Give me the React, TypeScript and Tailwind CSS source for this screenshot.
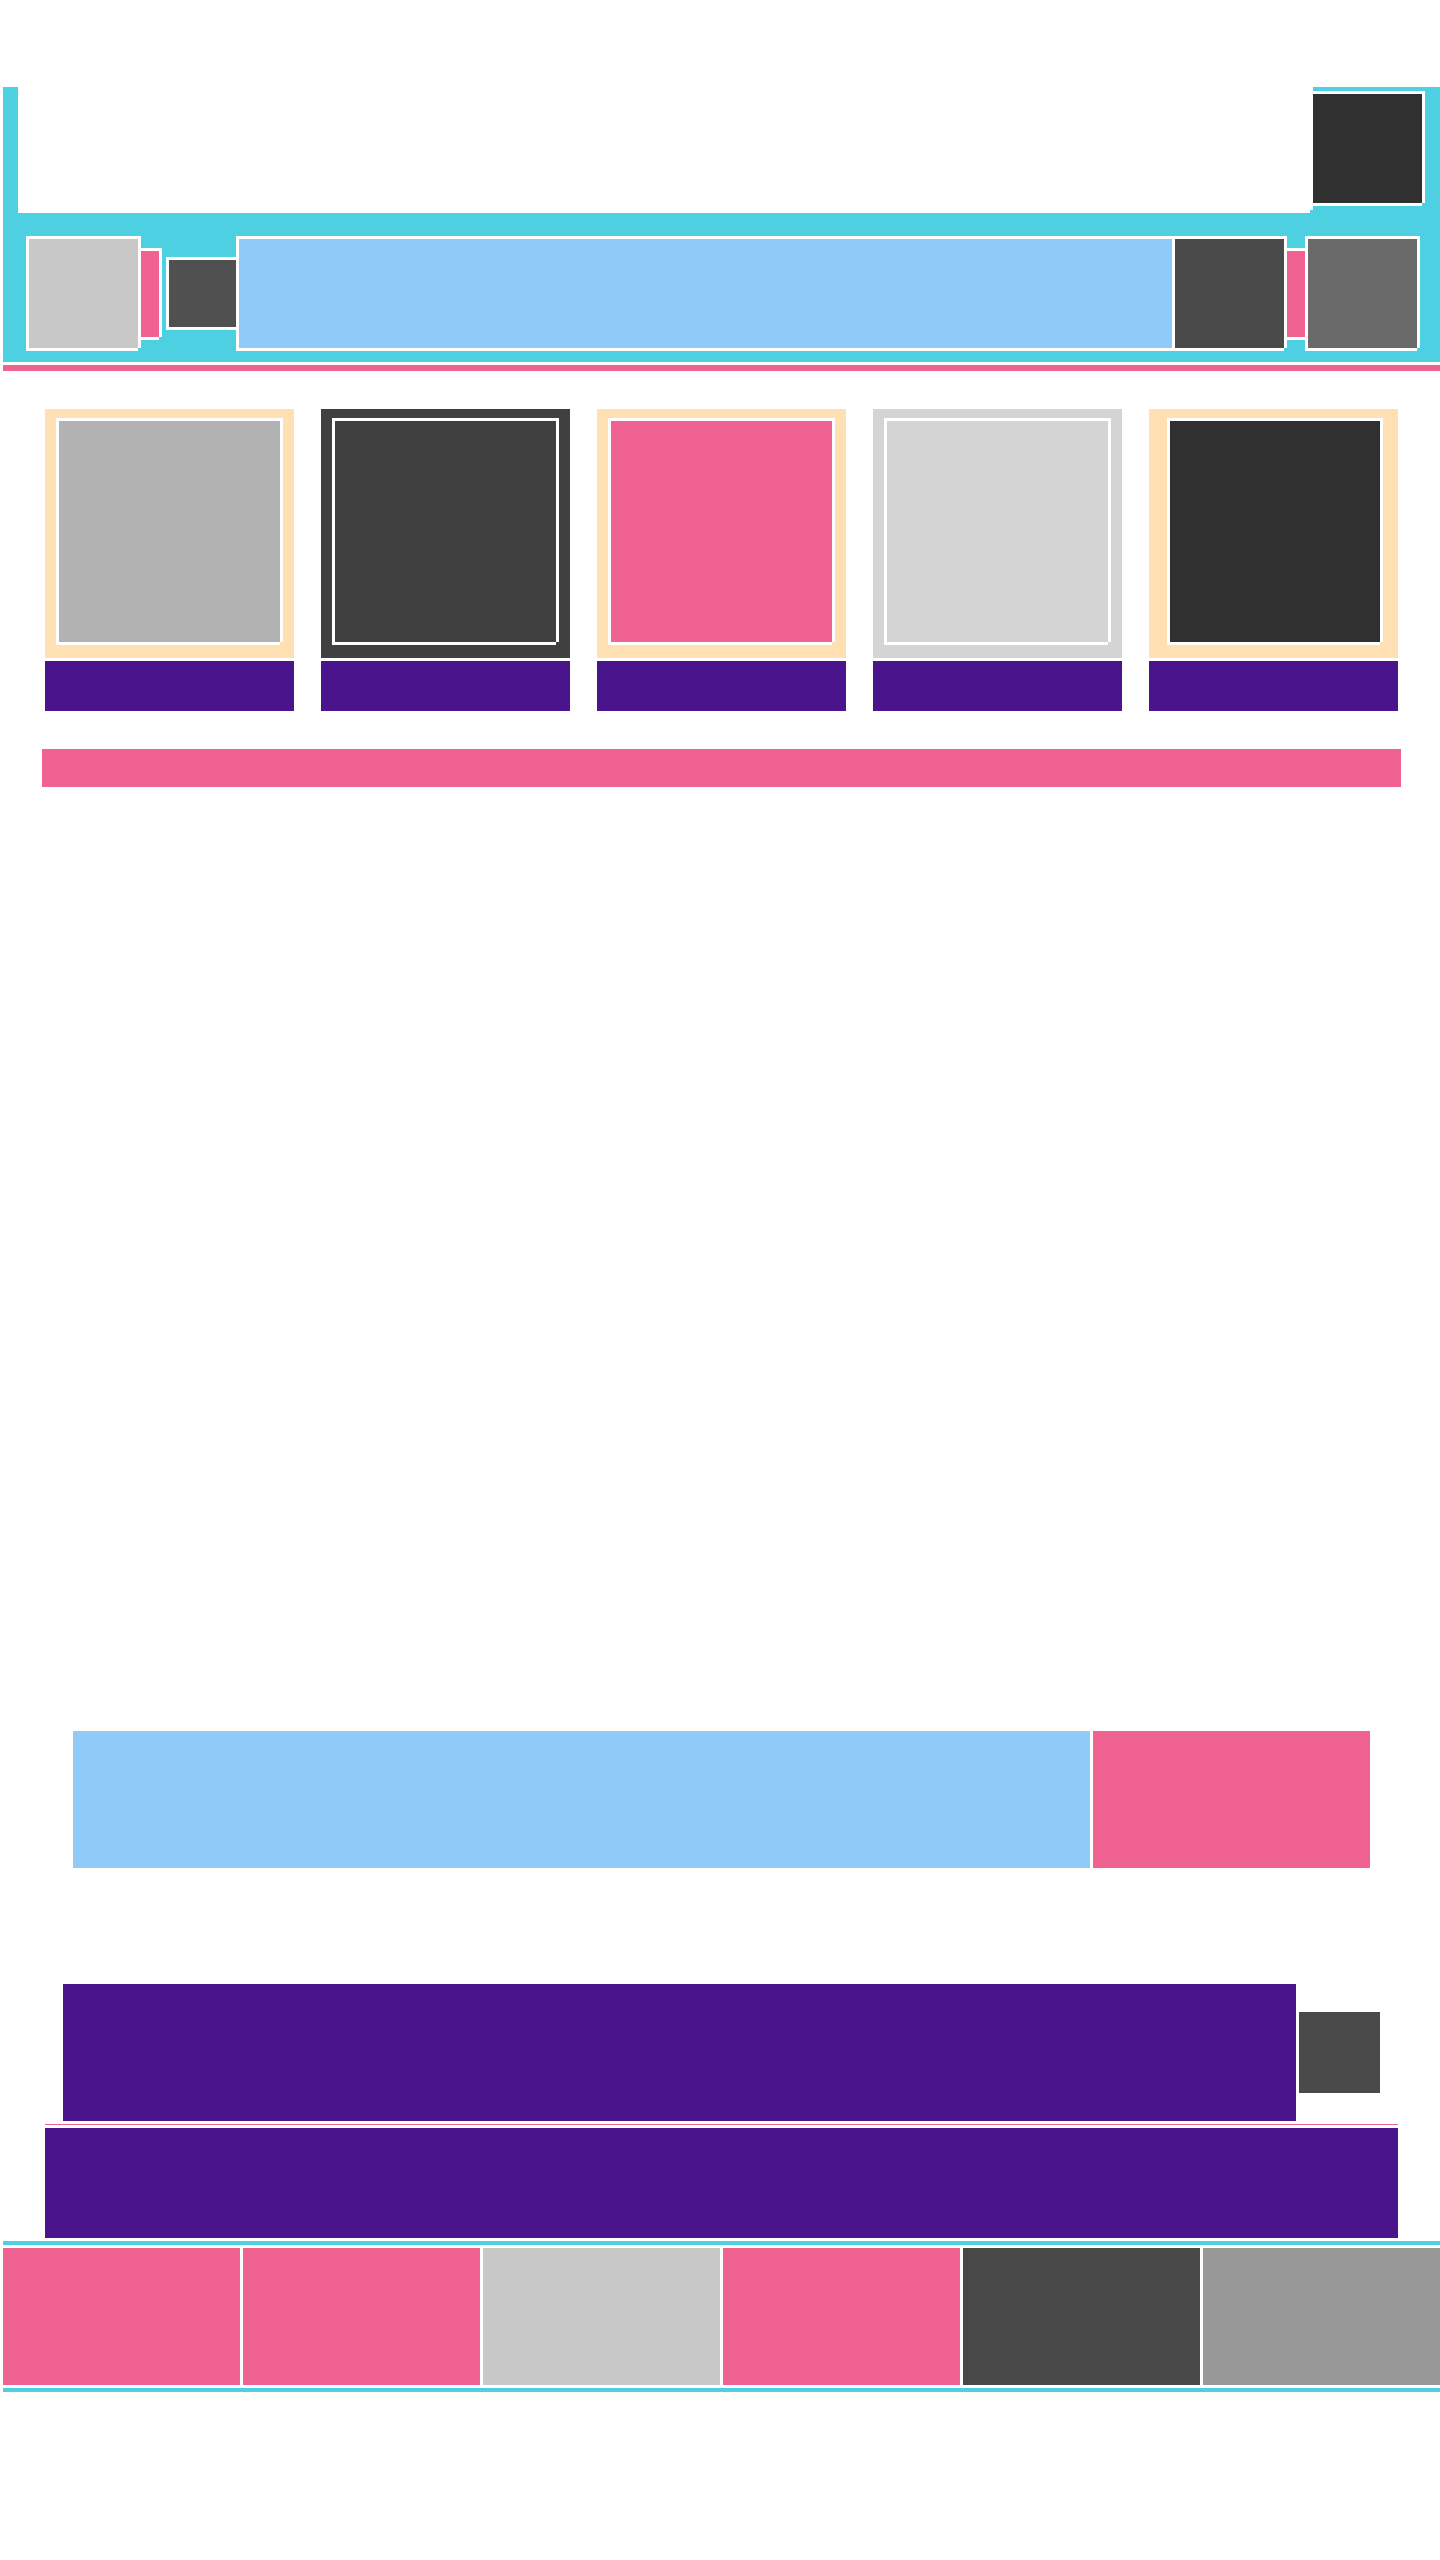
const outline =
  "shadow-[-3px_-3px_0_#fff,3px_-3px_0_#fff,3px_0_0_#fff,-3px_3px_0_#fff,0_3px_0_#fff]";

const cards = [
  { frame: "bg-[#ffe0b2] pl-[14px] pr-[14px]", fill: "bg-[#b2b2b2]" },
  { frame: "bg-[#404040] pl-[14px] pr-[14px]", fill: "bg-[#404040]" },
  { frame: "bg-[#ffe0b2] pl-[14px] pr-[14px]", fill: "bg-[#f06292]" },
  { frame: "bg-[#d4d4d4] pl-[14px] pr-[14px]", fill: "bg-[#d4d4d4]" },
  { frame: "bg-[#ffe0b2] pl-[21px] pr-[18px]", fill: "bg-[#303030]" },
];

const tabs = [
  "bg-[#f06292]",
  "bg-[#f06292]",
  "bg-[#c8c8c8]",
  "bg-[#f06292]",
  "bg-[#484848]",
  "bg-[#989898]",
];

function Block({ className }: { className: string }) {
  return <div className={`${outline} ${className}`} />;
}

function Header() {
  return (
    <header className="ml-[3px]">
      <div className="bg-[#4dd0e1] pb-[14px]">
        <div className="flex items-start gap-[3px] pl-[15px] pr-[18px]">
          <div className="h-[123px] flex-1 bg-white shadow-[3px_0_0_#fff,0_3px_0_#fff]" />
          <Block className="mt-[7px] size-[109px] shrink-0 bg-[#303030]" />
        </div>
        <div className="mt-[29px] flex items-center gap-[3px] pl-[26px] pr-[23px]">
          <Block className="size-[109px] shrink-0 bg-[#c8c8c8]" />
          <Block className="h-[86px] w-[18px] shrink-0 bg-[#f06292]" />
          <Block className="ml-[7px] size-[67px] shrink-0 bg-[#505050]" />
          <Block className="h-[109px] flex-1 bg-[#90caf9]" />
          <Block className="size-[109px] shrink-0 bg-[#4a4a4a]" />
          <Block className="h-[86px] w-[18px] shrink-0 bg-[#f06292]" />
          <Block className="size-[109px] shrink-0 bg-[#6a6a6a]" />
        </div>
      </div>
      <div className="mt-[3px] h-[6px] bg-[#f06292]" />
    </header>
  );
}

function Cards() {
  return (
    <section className="mt-[38px] grid grid-cols-5 gap-[27px] pl-[45px] pr-[42px]">
      {cards.map((card, i) => (
        <article key={i} className="flex flex-col gap-[3px]">
          <div className={`pb-[16px] pt-[12px] ${card.frame}`}>
            <Block className={`h-[221px] ${card.fill}`} />
          </div>
          <div className="h-[50px] bg-[#4a148c]" />
        </article>
      ))}
    </section>
  );
}

function Tabs() {
  return (
    <footer className="ml-[3px] mt-[3px] flex flex-col gap-[3px]">
      <div className="h-1 bg-[#4dd0e1]" />
      <div className="grid grid-cols-6 gap-[3px]">
        {tabs.map((fill, i) => (
          <div key={i} className={`h-[137px] ${fill}`} />
        ))}
      </div>
      <div className="h-1 bg-[#4dd0e1]" />
    </footer>
  );
}

export default function App() {
  return (
    <div className="min-h-screen bg-white pt-[87px]">
      <Header />
      <main>
        <Cards />
        <div className="ml-[42px] mr-[39px] mt-[38px] h-[38px] bg-[#f06292]" />
        <section className="mt-[944px] flex gap-[3px] pl-[73px] pr-[70px]">
          <div className="h-[137px] flex-1 bg-[#90caf9]" />
          <div className="h-[137px] w-[277px] shrink-0 bg-[#f06292]" />
        </section>
        <section className="mt-[116px] flex items-center gap-[3px] pl-[63px] pr-[60px]">
          <div className="h-[137px] flex-1 bg-[#4a148c]" />
          <div className="size-[81px] shrink-0 bg-[#4a4a4a]" />
        </section>
        <section className="mt-[3px] flex flex-col gap-[3px] pl-[45px] pr-[42px]">
          <div className="h-px bg-[#f06292]" />
          <div className="h-[110px] bg-[#4a148c]" />
        </section>
      </main>
      <Tabs />
    </div>
  );
}
